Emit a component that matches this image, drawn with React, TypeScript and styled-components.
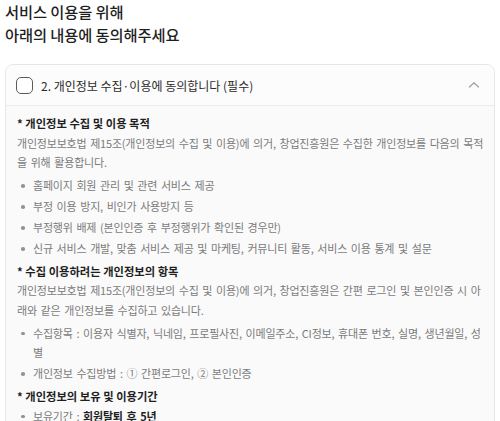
import styled, { createGlobalStyle } from "styled-components";

const GlobalStyle = createGlobalStyle`
    body{
        margin: 0;
        background-color: #ffffff;
        font-family: "Noto Sans CJK KR", "Noto Sans", sans-serif;
        color: #222222;
    }
    *{
        box-sizing: border-box;
    }
`

type Item = { text: string; strong?: string };

const sections: { title: string; desc?: string; items: Item[] }[] = [
    {
        title: "* 개인정보 수집 및 이용 목적",
        desc: "개인정보보호법 제15조(개인정보의 수집 및 이용)에 의거, 창업진흥원은 수집한 개인정보를 다음의 목적을 위해 활용합니다.",
        items: [
            { text: "홈페이지 회원 관리 및 관련 서비스 제공" },
            { text: "부정 이용 방지, 비인가 사용방지 등" },
            { text: "부정행위 배제 (본인인증 후 부정행위가 확인된 경우만)" },
            { text: "신규 서비스 개발, 맞춤 서비스 제공 및 마케팅, 커뮤니티 활동, 서비스 이용 통계 및 설문" },
        ],
    },
    {
        title: "* 수집 이용하려는 개인정보의 항목",
        desc: "개인정보보호법 제15조(개인정보의 수집 및 이용)에 의거, 창업진흥원은 간편 로그인 및 본인인증 시 아래와 같은 개인정보를 수집하고 있습니다.",
        items: [
            { text: "수집항목 : 이용자 식별자, 닉네임, 프로필사진, 이메일주소, CI정보, 휴대폰 번호, 실명, 생년월일, 성별" },
            { text: "개인정보 수집방법 : ① 간편로그인, ② 본인인증" },
        ],
    },
    {
        title: "* 개인정보의 보유 및 이용기간",
        items: [{ text: "보유기간 : ", strong: "회원탈퇴 후 5년" }],
    },
];

const Agreement = () => {
    return (
        <Page>
            <GlobalStyle />
            <Title>
                서비스 이용을 위해
                <br />
                아래의 내용에 동의해주세요
            </Title>
            <Card>
                <Header>
                    <CheckBox />
                    <HeaderText>2. 개인정보 수집·이용에 동의합니다 (필수)</HeaderText>
                    <svg viewBox="0 0 12 8" fill="none" stroke="#a3a3a3" strokeWidth={1.3} strokeLinecap="round" strokeLinejoin="round" className="toggle">
                        <path d="M1.5 6L6 1.8L10.5 6" />
                    </svg>
                </Header>
                <Body>
                    {sections.map((s) => (
                        <Section key={s.title}>
                            <SectionTitle>{s.title}</SectionTitle>
                            {s.desc && <Desc>{s.desc}</Desc>}
                            <List $afterTitle={!s.desc}>
                                {s.items.map((it) => (
                                    <li key={it.text}>
                                        {it.text}
                                        {it.strong && <b>{it.strong}</b>}
                                    </li>
                                ))}
                            </List>
                        </Section>
                    ))}
                </Body>
            </Card>
        </Page>
    )
}

const Page = styled.div`
    padding: 0 5px;
`
const Title = styled.h1`
    margin: 0;
    font-size: 15.3px;
    font-weight: 500;
    line-height: 23px;
    color: #1f1f1f;
    letter-spacing: -.1px;
`
const Card = styled.div`
    margin-top: 18px;
    border: 1px solid #e7e7e7;
    border-radius: 8px;
    overflow: hidden;
`
const Header = styled.div`
    display: flex;
    align-items: center;
    height: 41px;
    padding: 0 12px 0 10px;
    background-color: #fcfcfc;
    border-bottom: 1px solid #ececec;
    svg.toggle{
        width: 12px;
        height: 8px;
        margin-left: auto;
        margin-right: 2px;
    }
`
const CheckBox = styled.span`
    width: 17px;
    height: 17px;
    border: 1.5px solid #5b5b5b;
    border-radius: 5px;
    background-color: #ffffff;
    flex-shrink: 0;
`
const HeaderText = styled.span`
    margin-left: 8px;
    font-size: 12px;
    color: #2b2b2b;
`
const Body = styled.div`
    background-color: #fafafa;
    padding: 8px 5.5px 0 11px;
    display: flex;
    flex-direction: column;
    gap: 1.5px;
`
const Section = styled.div`
    display: flex;
    flex-direction: column;
`
const SectionTitle = styled.div`
    font-size: 11.3px;
    font-weight: 700;
    line-height: 19.5px;
    color: #1f1f1f;
`
const Desc = styled.p`
    margin: 0;
    font-size: 11px;
    line-height: 19.5px;
    color: #7a7a7a;
    letter-spacing: -.2px;
    word-spacing: 1.5px;
`
const List = styled.ul<{ $afterTitle?: boolean }>`
    margin: ${(p) => (p.$afterTitle ? "0.5px" : "3.5px")} 0 0 0;
    padding: 0 0 0 16px;
    list-style: none;
    li{
        position: relative;
        font-size: 11px;
        line-height: 19.5px;
        color: #7a7a7a;
        margin-bottom: 1.5px;
        letter-spacing: -.2px;
        word-spacing: 1.5px;
        &::before{
            content: '';
            position: absolute;
            left: -12px;
            top: 8px;
            width: 3.5px;
            height: 3.5px;
            border-radius: 50%;
            background-color: #939393;
        }
        b{
            color: #1f1f1f;
            font-weight: 700;
        }
    }
`

export default Agreement;
